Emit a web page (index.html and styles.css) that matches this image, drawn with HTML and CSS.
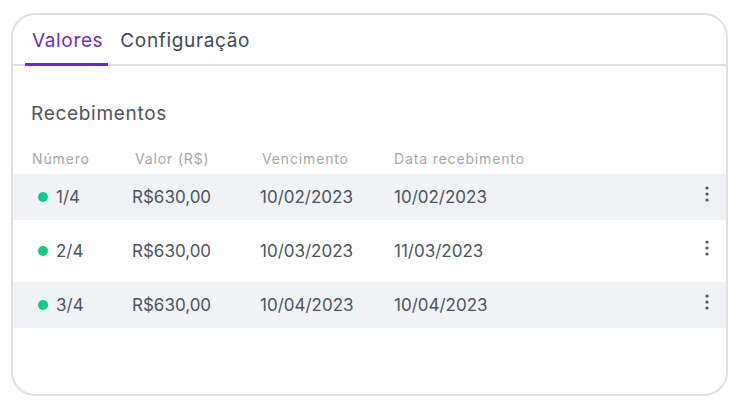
FILE: index.html
```html
<!DOCTYPE html>
<html lang="pt-BR">
<head>
<meta charset="utf-8">
<title>Recebimentos</title>
<link rel="stylesheet" href="styles.css">
</head>
<body>
<div class="card">
  <div class="tabs">
    <div class="tab active">Valores</div>
    <div class="tab">Configuração</div>
  </div>
  <div class="section">
    <h2 class="title">Recebimentos</h2>
    <div class="table">
      <div class="head">
        <div class="hcell">Número</div>
        <div class="hcell h2">Valor (R$)</div>
        <div class="hcell h3">Vencimento</div>
        <div class="hcell">Data recebimento</div>
        <div></div>
      </div>
      <div class="row striped">
        <div class="cell num"><span class="dot"></span>1/4</div>
        <div class="cell">R$630,00</div>
        <div class="cell">10/02/2023</div>
        <div class="cell">10/02/2023</div>
        <svg class="kebab" width="20" height="20" viewBox="0 0 20 20"><circle cx="10" cy="4" r="1.6"/><circle cx="10" cy="10" r="1.6"/><circle cx="10" cy="16" r="1.6"/></svg>
      </div>
      <div class="row">
        <div class="cell num"><span class="dot"></span>2/4</div>
        <div class="cell">R$630,00</div>
        <div class="cell">10/03/2023</div>
        <div class="cell">11/03/2023</div>
        <svg class="kebab" width="20" height="20" viewBox="0 0 20 20"><circle cx="10" cy="4" r="1.6"/><circle cx="10" cy="10" r="1.6"/><circle cx="10" cy="16" r="1.6"/></svg>
      </div>
      <div class="row striped">
        <div class="cell num"><span class="dot"></span>3/4</div>
        <div class="cell">R$630,00</div>
        <div class="cell">10/04/2023</div>
        <div class="cell">10/04/2023</div>
        <svg class="kebab" width="20" height="20" viewBox="0 0 20 20"><circle cx="10" cy="4" r="1.6"/><circle cx="10" cy="10" r="1.6"/><circle cx="10" cy="16" r="1.6"/></svg>
      </div>
    </div>
  </div>
</div>
</body>
</html>
```
FILE: styles.css
```css
* { box-sizing: border-box; }
html, body { margin: 0; padding: 0; background: #ffffff; }
body {
  font-family: Inter, "Open Sans", "DejaVu Sans", sans-serif;
  color: #4b5563;
}
.card {
  margin: 13px 0 0 11px;
  width: 717px;
  height: 383px;
  border: 2px solid #dde1e5;
  border-radius: 24px;
  overflow: hidden;
  background: #fff;
}
.tabs {
  display: flex;
  gap: 5px;
  padding-left: 12px;
  border-bottom: 2px solid #dde1e5;
}
.tab {
  height: 51px;
  margin-bottom: -2px;
  padding: 14px 5px 0 7px;
  font-size: 19px;
  line-height: 24px;
  color: #3f4a56;
  border-bottom: 3px solid transparent;
  letter-spacing: 0.65px;
}
.tab.active {
  color: #6d2fc7;
  border-bottom-color: #6d28c9;
}
.section {
  padding-top: 36px;
}
.title {
  margin: 0 0 23px 18px;
  font-size: 19px;
  line-height: 24px;
  font-weight: 400;
  color: #4a5561;
  letter-spacing: 0.7px;
}
.table {
  display: flex;
  flex-direction: column;
  gap: 8px;
}
.head, .row {
  display: grid;
  grid-template-columns: 100px 128px 134px 1fr 20px;
  padding: 0 9px 0 19px;
}
.head {
  height: 25px;
  margin-bottom: -8px;
  font-size: 14px;
  line-height: 20px;
  color: #a6a6a6;
  letter-spacing: 0.85px;
}
.h2 { padding-left: 3px; }
.h3 { padding-left: 2px; }
.row {
  height: 46px;
  align-items: center;
  font-size: 17px;
  line-height: 46px;
  color: #4a5561;
  letter-spacing: 0;
}
.row.striped { background: #f1f2f6; }
.num {
  display: flex;
  align-items: center;
  padding-left: 6px;
}
.dot {
  width: 10px;
  height: 10px;
  border-radius: 50%;
  background: #0bcf86;
  margin-right: 8px;
}
.kebab {
  fill: #4a5561;
  margin-bottom: 6px;
}
```
